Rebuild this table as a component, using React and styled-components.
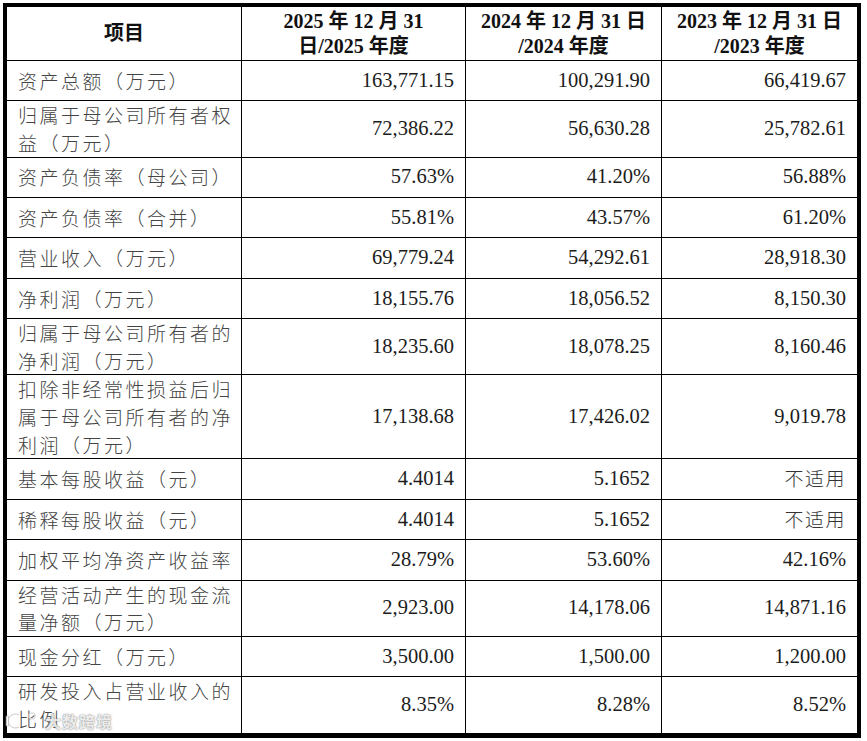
import React from "react";
import styled, { createGlobalStyle } from "styled-components";

const rows = [
  { label: "资产总额（万元）", values: ["163,771.15", "100,291.90", "66,419.67"], lines: 1 },
  { label: "归属于母公司所有者权益（万元）", values: ["72,386.22", "56,630.28", "25,782.61"], lines: 2 },
  { label: "资产负债率（母公司）", values: ["57.63%", "41.20%", "56.88%"], lines: 1 },
  { label: "资产负债率（合并）", values: ["55.81%", "43.57%", "61.20%"], lines: 1 },
  { label: "营业收入（万元）", values: ["69,779.24", "54,292.61", "28,918.30"], lines: 1 },
  { label: "净利润（万元）", values: ["18,155.76", "18,056.52", "8,150.30"], lines: 1 },
  { label: "归属于母公司所有者的净利润（万元）", values: ["18,235.60", "18,078.25", "8,160.46"], lines: 2 },
  { label: "扣除非经常性损益后归属于母公司所有者的净利润（万元）", values: ["17,138.68", "17,426.02", "9,019.78"], lines: 3 },
  { label: "基本每股收益（元）", values: ["4.4014", "5.1652", "不适用"], lines: 1 },
  { label: "稀释每股收益（元）", values: ["4.4014", "5.1652", "不适用"], lines: 1 },
  { label: "加权平均净资产收益率", values: ["28.79%", "53.60%", "42.16%"], lines: 1 },
  { label: "经营活动产生的现金流量净额（万元）", values: ["2,923.00", "14,178.06", "14,871.16"], lines: 2 },
  { label: "现金分红（万元）", values: ["3,500.00", "1,500.00", "1,200.00"], lines: 1 },
  { label: "研发投入占营业收入的比例", values: ["8.35%", "8.28%", "8.52%"], lines: 2 },
];

const rowHeights = { 1: 40.4, 2: 56, 3: 84 };

const GlobalStyle = createGlobalStyle`
  html, body {
    margin: 0;
    padding: 0;
    background: #fff;
  }
  body {
    font-family: "Liberation Serif", "Noto Sans CJK SC", serif;
  }
`;

const Page = styled.div`
  position: relative;
  width: 867px;
  height: 741px;
  padding: 3px 0 0 3px;
  box-sizing: border-box;
  overflow: hidden;
`;

const Table = styled.table`
  border-collapse: separate;
  border-spacing: 0;
  border: 4px solid #000;
  border-bottom-width: 5px;
  table-layout: fixed;
  width: 858px;
`;

const HeadCell = styled.th`
  height: 54px;
  box-sizing: border-box;
  padding: 0 6px;
  border-right: ${({ $last }) => ($last ? "0" : "1px solid #000")};
  border-bottom: 1px solid #000;
  font-family: "Liberation Serif", "Noto Sans CJK SC", serif;
  font-weight: 700;
  font-size: 20px;
  line-height: 25px;
  color: #111;
  text-align: center;
  vertical-align: middle;
`;

const LabelCell = styled.td`
  height: ${({ $h }) => $h}px;
  box-sizing: border-box;
  padding: 0 2px 0 11px;
  border-right: 1px solid #000;
  border-bottom: ${({ $last }) => ($last ? "0" : "1px solid #000")};
  font-family: "Noto Sans CJK SC", sans-serif;
  font-weight: 300;
  font-size: 19px;
  letter-spacing: 2.5px;
  line-height: 27.6px;
  color: #444;
  vertical-align: middle;
`;

const ValueCell = styled.td`
  box-sizing: border-box;
  padding: 0 11px 0 6px;
  border-right: ${({ $lastCol }) => ($lastCol ? "0" : "1px solid #000")};
  border-bottom: ${({ $last }) => ($last ? "0" : "1px solid #000")};
  font-family: "Liberation Serif", "Noto Sans CJK SC", serif;
  font-size: 20.5px;
  line-height: 27.6px;
  color: #1c1c1c;
  text-align: right;
  vertical-align: middle;
`;

const Cjk = styled.span`
  font-family: "Noto Sans CJK SC", sans-serif;
  font-weight: 300;
  font-size: 19px;
  letter-spacing: 1.5px;
  color: #333;
`;

const Watermark = styled.div`
  position: absolute;
  left: 5px;
  top: 709px;
  display: flex;
  align-items: center;
  gap: 4px;
  opacity: 0.85;
  pointer-events: none;
`;

const MarkText = styled.span`
  font-family: "Noto Sans CJK SC", sans-serif;
  font-weight: 700;
  font-size: 16px;
  letter-spacing: 1px;
  color: rgba(255, 255, 255, 0.85);
  text-shadow: 0 0 1px #777, 0 0 2px #999;
`;

const Logo = () => (
  <svg width="36" height="20" viewBox="0 0 36 20">
    <path d="M14 4 A7 7 0 1 0 14 16" fill="none" stroke="#fff" strokeWidth="3" />
    <path d="M14 4 A7 7 0 1 0 14 16" fill="none" stroke="#999" strokeWidth="1" opacity="0.6" />
    <rect x="1" y="5" width="2.5" height="10" fill="#fff" stroke="#999" strokeWidth="0.6" />
    <circle cx="27" cy="5" r="3" fill="none" stroke="#ddd" strokeWidth="1.5" />
  </svg>
);

const isCjk = (v) => /[\u4e00-\u9fff]/.test(v);

export default function App() {
  return (
    <Page>
      <GlobalStyle />
      <Table>
        <colgroup>
          <col style={{ width: 235 }} />
          <col style={{ width: 224 }} />
          <col style={{ width: 196 }} />
          <col style={{ width: 195 }} />
        </colgroup>
        <thead>
          <tr>
            <HeadCell>项目</HeadCell>
            <HeadCell>
              2025 年 12 月 31
              <br />
              日/2025 年度
            </HeadCell>
            <HeadCell>
              2024 年 12 月 31 日
              <br />
              /2024 年度
            </HeadCell>
            <HeadCell $last>
              2023 年 12 月 31 日
              <br />
              /2023 年度
            </HeadCell>
          </tr>
        </thead>
        <tbody>
          {rows.map((r, i) => {
            const last = i === rows.length - 1;
            return (
              <tr key={r.label}>
                <LabelCell $h={rowHeights[r.lines]} $last={last}>
                  {r.label}
                </LabelCell>
                {r.values.map((v, j) => (
                  <ValueCell key={j} $last={last} $lastCol={j === 2}>
                    {isCjk(v) ? <Cjk>{v}</Cjk> : v}
                  </ValueCell>
                ))}
              </tr>
            );
          })}
        </tbody>
      </Table>
      <Watermark>
        <Logo />
        <MarkText>大数跨境</MarkText>
      </Watermark>
    </Page>
  );
}
